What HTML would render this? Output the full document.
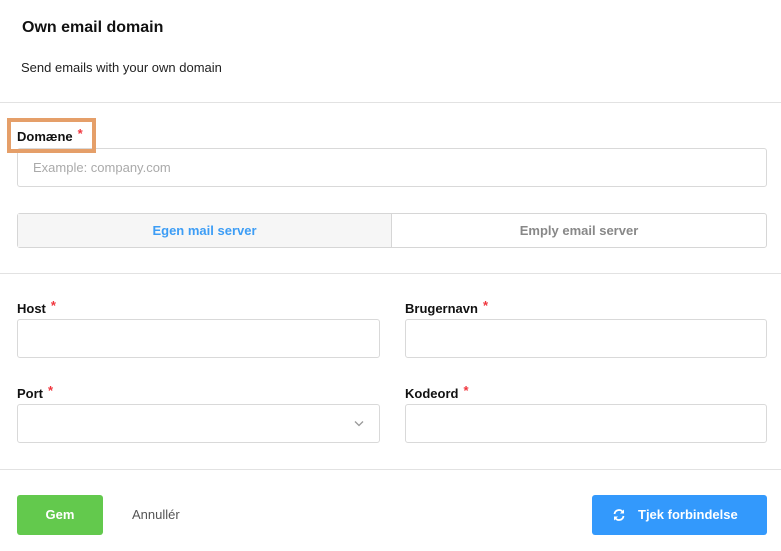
<!DOCTYPE html>
<html><head><style>
*{box-sizing:border-box;margin:0;padding:0}
body{width:781px;height:551px;background:#fff;font-family:"Liberation Sans",sans-serif;position:relative;overflow:hidden;color:#111}
.a{position:absolute}
.hr{position:absolute;left:0;width:781px;height:1px;background:#e2e2e2}
.lbl{position:absolute;font-size:13px;font-weight:bold;color:#111}
.lbl span{color:#f0353d;margin-left:5px;position:relative;top:-3px}
.inp{position:absolute;height:39px;border:1px solid #d9d9d9;border-radius:3px;background:#fff}
</style></head><body>
<div class="a" style="left:22px;top:19px;font-size:16px;font-weight:bold">Own email domain</div>
<div class="a" style="left:21px;top:60px;font-size:13px;color:#222">Send emails with your own domain</div>
<div class="hr" style="top:102px"></div>
<div class="lbl" style="left:17px;top:129px">Domæne<span>*</span></div>
<div class="inp" style="left:17px;top:148px;width:750px"></div>
<div class="a" style="left:7px;top:118px;width:89px;height:35px;border:4px solid #e59f69;z-index:2"></div>
<div class="a" style="left:33px;top:160px;font-size:13px;color:#aaa">Example: company.com</div>
<div class="a" style="left:17px;top:213px;width:750px;height:35px;border:1px solid #d6d6d6;border-radius:3px;display:flex">
<div style="width:374px;background:#f6f6f6;border-right:1px solid #d6d6d6;text-align:center;line-height:33px;font-size:13px;font-weight:bold;color:#3d9df5">Egen mail server</div>
<div style="flex:1;text-align:center;line-height:33px;font-size:13px;font-weight:bold;color:#888">Emply email server</div>
</div>
<div class="hr" style="top:273px"></div>
<div class="lbl" style="left:17px;top:301px">Host<span>*</span></div>
<div class="inp" style="left:17px;top:319px;width:363px"></div>
<div class="lbl" style="left:405px;top:301px">Brugernavn<span>*</span></div>
<div class="inp" style="left:405px;top:319px;width:362px"></div>
<div class="lbl" style="left:17px;top:386px">Port<span>*</span></div>
<div class="inp" style="left:17px;top:404px;width:363px"></div>
<svg class="a" style="left:354px;top:420px" width="10" height="7" viewBox="0 0 10 7"><path d="M1 1.5l4 4 4-4" fill="none" stroke="#999" stroke-width="1.3"/></svg>
<div class="lbl" style="left:405px;top:386px">Kodeord<span>*</span></div>
<div class="inp" style="left:405px;top:404px;width:362px"></div>
<div class="hr" style="top:469px"></div>
<div class="a" style="left:17px;top:495px;width:86px;height:40px;background:#63c94d;border-radius:3px;color:#fff;font-size:13px;font-weight:bold;text-align:center;line-height:40px">Gem</div>
<div class="a" style="left:132px;top:507px;font-size:13px;color:#555">Annullér</div>
<div class="a" style="left:592px;top:495px;width:175px;height:40px;background:#3399fc;border-radius:3px;color:#fff;font-size:13px;font-weight:bold;line-height:40px;padding-left:46px">Tjek forbindelse</div>
<svg class="a" style="left:612px;top:508px" width="14" height="14" viewBox="0 0 14 14"><path d="M2.5 6A4.5 4.5 0 0 1 11 4.5M11.5 8A4.5 4.5 0 0 1 3 9.5" fill="none" stroke="#fff" stroke-width="1.8"/><path d="M12 1.5v4h-4zM2 12.5v-4h4z" fill="#fff"/></svg>
</body></html>
